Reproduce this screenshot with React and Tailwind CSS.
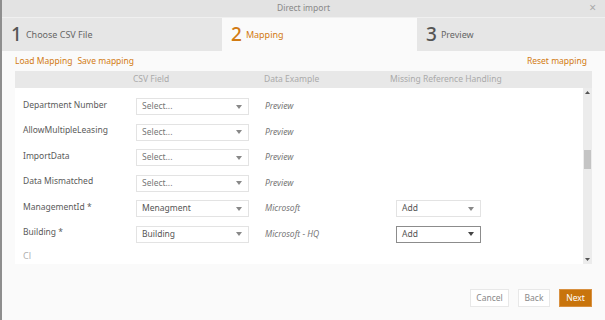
const rows = [
  { name: 'Department Number', value: 'Select...', example: 'Preview' },
  { name: 'AllowMultipleLeasing', value: 'Select...', example: 'Preview' },
  { name: 'ImportData', value: 'Select...', example: 'Preview' },
  { name: 'Data Mismatched', value: 'Select...', example: 'Preview' },
  { name: 'ManagementId *', value: 'Menagment', example: 'Microsoft', handling: 'Add' },
  { name: 'Building *', value: 'Building', example: 'Microsoft - HQ', handling: 'Add', focused: true },
];

const steps = [
  { n: '1', label: 'Choose CSV File', w: 'w-[220px]' },
  { n: '2', label: 'Mapping', w: 'w-[195px]', active: true },
  { n: '3', label: 'Preview', w: 'flex-1' },
];

function Caret({ dark }) {
  return (
    <svg width="6" height="4" viewBox="0 0 6 4" className="shrink-0">
      <path d="M0 0h6L3 4z" fill={dark ? '#444' : '#888'} />
    </svg>
  );
}

function Dropdown({ value, width, focused }) {
  return (
    <div
      className={`h-[17px] ${width} flex items-center justify-between pl-[5px] pr-[6px] bg-white border ${
        focused ? 'border-[#8c8c8c]' : 'border-[#e3e3e3]'
      } ${value === 'Select...' ? 'text-[#777]' : 'text-[#555]'}`}
    >
      <span>{value}</span>
      <Caret dark={focused} />
    </div>
  );
}

export default function App() {
  return (
    <div className="w-[605px] h-[320px] flex bg-[#fafafa] text-[8.5px] text-[#5a5a5a] overflow-hidden" style={{ fontFamily: '"Noto Sans", "Open Sans", sans-serif' }}>
      <div className="w-[2px] bg-[#8e8e8e]" />
      <div className="flex-1 flex flex-col">
        {/* title bar */}
        <div className="h-[18px] bg-[#e3e3e3] border-b border-[#f0f0f0] relative flex items-center justify-center text-[#888]">
          Direct import
          <span className="absolute right-[9px] top-[1px] text-[12px] leading-[14px] text-[#aaa]">×</span>
        </div>

        {/* steps */}
        <div className="h-[33px] flex bg-[#e6e6e6]">
          {steps.map((s) => (
            <div key={s.n} className={`${s.w} flex items-center gap-[4px] pl-[9px] ${s.active ? 'bg-[#fafafa]' : ''}`}>
              <span className={`text-[19px] font-medium leading-none ${s.active ? 'text-[#d27b12]' : 'text-[#555]'}`}>{s.n}</span>
              <span className={`text-[9px] ${s.active ? 'text-[#d27b12]' : 'text-[#666]'}`}>{s.label}</span>
            </div>
          ))}
        </div>

        {/* content */}
        <div className="flex-1 flex flex-col pl-[13px] pr-[13px]">
          <div className="h-[20px] flex items-center justify-between text-[#d27b12]">
            <div className="flex gap-[5px]">
              <span>Load Mapping</span>
              <span>Save mapping</span>
            </div>
            <span className="mr-[5px]">Reset mapping</span>
          </div>

          <div className="h-[17px] bg-[#e8e8e8] flex items-center text-[#aaa]">
            <span className="ml-[118px] w-[131px]">CSV Field</span>
            <span className="w-[126px]">Data Example</span>
            <span>Missing Reference Handling</span>
          </div>

          <div className="flex h-[176px]">
            <div className="flex-1 bg-white flex flex-col pl-[8px] pr-[8px] overflow-hidden">
              <div className="flex flex-col pt-[6px]">
                {rows.map((r) => (
                  <div key={r.name} className="h-[25.5px] flex items-center shrink-0">
                    <span className="w-[113px] -mt-[3px]">{r.name}</span>
                    <Dropdown value={r.value} width="w-[113px]" focused={false} />
                    <span className="ml-[16px] w-[131px] italic text-[#777]">{r.example}</span>
                    {r.handling && <Dropdown value={r.handling} width="w-[85px]" focused={r.focused} />}
                  </div>
                ))}
                <div className="h-[18px] flex items-center text-[#b0b0b0] text-[9px] shrink-0">Cl</div>
              </div>
              <div className="mt-auto h-[2px] bg-[#ececec] mb-[2px] mx-[-1px]" />
            </div>
            <div className="w-[9px] bg-[#ececec] flex flex-col items-center justify-between py-[3px]">
              <svg width="5" height="3" viewBox="0 0 5 3"><path d="M0 3h5L2.5 0z" fill="#555" /></svg>
              <div className="flex-1 w-full px-[1px]">
                <div className="h-[19px] bg-[#c4c4c4] mt-[56px]" />
              </div>
              <svg width="5" height="3" viewBox="0 0 5 3"><path d="M0 0h5L2.5 3z" fill="#555" /></svg>
            </div>
          </div>

          <div className="flex justify-end gap-[9px] mt-[25px]">
            <button className="h-[18px] w-[39px] bg-white border border-[#e8e8e8] text-[#888]">Cancel</button>
            <button className="h-[18px] w-[32px] bg-white border border-[#e8e8e8] text-[#888]">Back</button>
            <button className="h-[18px] w-[33px] bg-[#c8740c] border border-[#d89040] text-white">Next</button>
          </div>
        </div>
      </div>
    </div>
  );
}
